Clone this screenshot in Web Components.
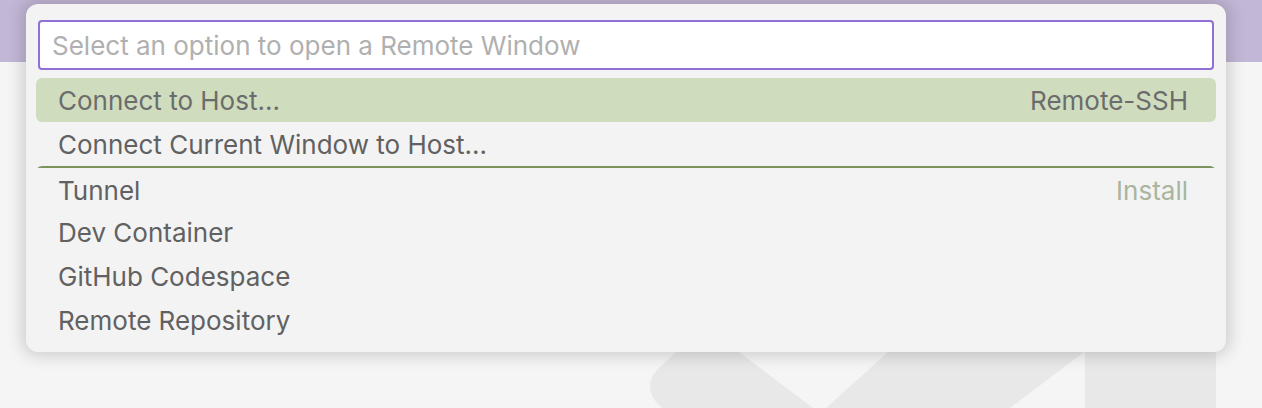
<!DOCTYPE html>
<html lang="en">
<head>
<meta charset="utf-8">
<title>Open a Remote Window</title>
<style>
  body { margin: 0; background: #f5f5f5; color: #616161; font: 26px/46px Inter, "Liberation Sans", sans-serif; }
</style>
</head>
<body>
<work-bench>
  <quick-pick slot="overlay" placeholder="Select an option to open a Remote Window">
    <pick-item selected>Connect to Host...<span slot="detail">Remote-SSH</span></pick-item>
    <pick-item>Connect Current Window to Host...</pick-item>
    <pick-item separated>Tunnel<span slot="detail">Install</span></pick-item>
    <pick-item>Dev Container</pick-item>
    <pick-item>GitHub Codespace</pick-item>
    <pick-item>Remote Repository</pick-item>
  </quick-pick>
</work-bench>
<script>
  class WorkBench extends HTMLElement {
    constructor() {
      super();
      this.attachShadow({ mode: 'open' }).innerHTML = `
        <style>
          :host { display: flex; flex-direction: column; position: relative; height: 100vh; overflow: hidden; }
          header { flex: none; height: 62px; background: #c2b7d6; }
          main { flex: 1; display: flex; justify-content: flex-end; align-items: flex-end; padding-right: 46px; }
          svg { display: block; width: 566px; height: 64px; fill: #e8e8e8; }
          .overlay { position: absolute; top: 4px; left: 26px; right: 36px; }
        </style>
        <header></header>
        <main>
          <svg viewBox="0 0 566 64" aria-hidden="true">
            <path d="M34 0 26 8 10 23Q0 32 0 42 0 54 12 64H163L89 8 78 0Z"/>
            <path d="M245 0 238 8 176 64H360L434 8 445 0Z"/>
            <path d="M435 0H566V64H435Z"/>
          </svg>
        </main>
        <div class="overlay"><slot name="overlay"></slot></div>`;
    }
  }

  class QuickPick extends HTMLElement {
    constructor() {
      super();
      this.attachShadow({ mode: 'open' }).innerHTML = `
        <style>
          :host { display: block; padding: 16px 10px 10px; border-radius: 12px; background: #f3f3f3; box-shadow: 0 0 16px 4px rgba(0, 0, 0, .16); }
          .field { padding: 0 2px 8px; }
          input { display: block; box-sizing: border-box; width: 100%; height: 50px; margin: 0; padding: 0 12px; border: 2px solid #9070d6; border-radius: 4px; outline: 0; background: #fff; color: #616161; font: inherit; }
          input::placeholder { color: #b0b0b0; opacity: 1; }
        </style>
        <div class="field"><input type="text"></div>
        <div><slot></slot></div>`;
    }
    connectedCallback() {
      const input = this.shadowRoot.querySelector('input');
      input.placeholder = this.getAttribute('placeholder');
      input.setAttribute('aria-label', input.placeholder);
    }
  }

  class PickItem extends HTMLElement {
    constructor() {
      super();
      this.attachShadow({ mode: 'open' }).innerHTML = `
        <style>
          :host { display: block; height: 44px; }
          button { display: flex; justify-content: space-between; align-items: flex-start; box-sizing: border-box; width: 100%; height: 44px; margin: 0; padding: 0 28px 0 22px; border: 0; border-radius: 6px; background: none; color: inherit; font: inherit; text-align: left; }
          :host([selected]) button { background: #cfddbe; color: #6c6c6c; }
          :host([separated]) button { padding-top: 2px; background: linear-gradient(#7b935c, #7b935c) top / 100% 2px no-repeat; }
          :host([separated]) .detail { color: #a9b59e; }
        </style>
        <button type="button"><span><slot></slot></span><span class="detail"><slot name="detail"></slot></span></button>`;
    }
  }

  customElements.define('work-bench', WorkBench);
  customElements.define('quick-pick', QuickPick);
  customElements.define('pick-item', PickItem);
</script>
</body>
</html>
